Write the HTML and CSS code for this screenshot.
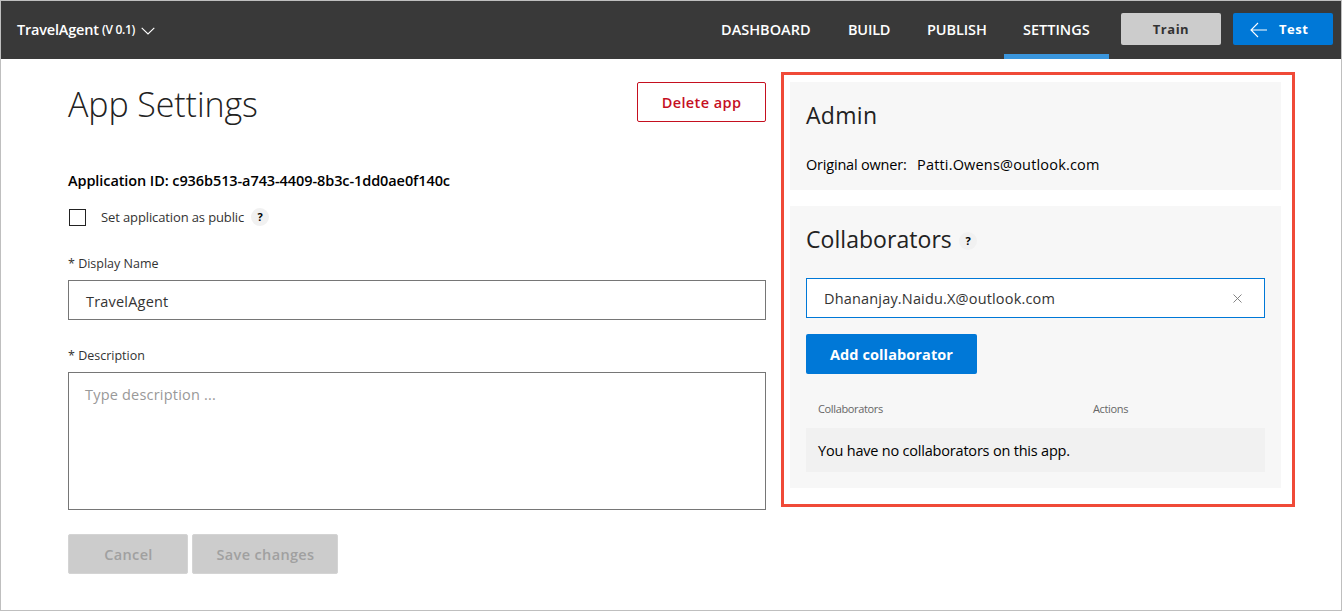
FILE: index.html
```html
<!DOCTYPE html>
<html lang="en">
<head>
<meta charset="utf-8">
<title>App Settings</title>
<link rel="stylesheet" href="styles.css">
</head>
<body>
<div class="page">
  <header class="topbar">
    <div class="app-switch">
      <span class="app-name">TravelAgent</span>
      <span class="app-version">(V 0.1)</span>
      <svg class="chevron" width="14" height="8" viewBox="0 0 14 8"><path d="M.7.8 7 7 13.3.8" fill="none" stroke="#fff" stroke-width="1.1"/></svg>
    </div>
    <nav class="nav">
      <a class="nav-item nav-dashboard">DASHBOARD</a>
      <a class="nav-item nav-build">BUILD</a>
      <a class="nav-item nav-publish">PUBLISH</a>
      <a class="nav-item nav-settings active">SETTINGS</a>
    </nav>
    <button class="top-btn train">Train</button>
    <button class="top-btn test">
      <svg class="arrow" width="18" height="16" viewBox="0 0 18 16"><path d="M17 8H1.200M8 1 1 8l7 7" fill="none" stroke="#fff" stroke-width="1.1"/></svg>
      <span>Test</span>
    </button>
  </header>
  <main class="content">
    <section class="settings">
      <div class="title-row">
        <h1 class="title">App Settings</h1>
        <button class="delete">Delete app</button>
      </div>
      <div class="app-id">Application ID: c936b513-a743-4409-8b3c-1dd0ae0f140c</div>
      <div class="public-row">
        <span class="checkbox"></span>
        <span class="public-label">Set application as public</span>
        <span class="help">?</span>
      </div>
      <div class="label label-name">* Display Name</div>
      <div class="field name-field">TravelAgent</div>
      <div class="label label-desc">* Description</div>
      <div class="field desc-field">Type description ...</div>
      <div class="actions">
        <button class="disabled cancel">Cancel</button>
        <button class="disabled save">Save changes</button>
      </div>
    </section>
    <aside class="access">
      <section class="panel admin">
        <h2 class="heading">Admin</h2>
        <div class="owner"><span class="owner-label">Original owner:</span><span class="owner-mail">Patti.Owens@outlook.com</span></div>
      </section>
      <section class="panel collab">
        <div class="collab-head"><h2 class="heading heading-collab">Collaborators</h2><span class="help">?</span></div>
        <div class="email-field">
          <span class="email">Dhananjay.Naidu.X@outlook.com</span>
          <svg width="9" height="9" viewBox="0 0 9 9"><path d="M.5.5l8 8M8.500.5l-8 8" fill="none" stroke="#777" stroke-width=".9"/></svg>
        </div>
        <button class="add">Add collaborator</button>
        <div class="table-head"><span class="col-name">Collaborators</span><span class="col-actions">Actions</span></div>
        <div class="table-empty"><span>You have no collaborators on this app.</span></div>
      </section>
    </aside>
  </main>
</div>
</body>
</html>
```
FILE: styles.css
```css
* { box-sizing: border-box; }
body { margin: 0; font-family: "Open Sans", "Noto Sans", sans-serif; color: #000; background: #fff; }
button { font-family: inherit; border: 0; padding: 0; margin: 0; border-radius: 2px; }
h1, h2 { margin: 0; font-weight: 300; }
span, a, h1, h2, div, button { white-space: nowrap; }

.page { width: 1342px; height: 611px; border: 1px solid #bfbfbf; overflow: hidden; }
.topbar { height: 58px; background: #393939; color: #fff; display: flex; align-items: flex-start; }
.app-switch { width: 702px; height: 57px; padding-left: 16px; display: flex; align-items: center; font-weight: 600; }
.app-name { width: 85px; font-size: 14.5px; letter-spacing: -.2px; }
.app-version { width: 39px; font-size: 12px; letter-spacing: -.3px; }
.chevron { margin-top: 3px; }
.nav { display: flex; height: 58px; }
.nav-item { height: 58px; line-height: 57px; font-size: 14.5px; font-weight: 600; letter-spacing: 0; padding-left: 18px; }
.nav-dashboard { width: 127px; }
.nav-build { width: 79px; letter-spacing: -.2px; }
.nav-publish { width: 95px; letter-spacing: -.1px; }
.nav-settings { width: 105px; padding-left: 19px; }
.active { border-bottom: 5px solid #3a96dd; }
.top-btn { width: 100px; height: 32px; margin-top: 12px; font-size: 13px; font-weight: 700; letter-spacing: .5px; }
.train { background: #ccc; color: #333; margin-left: 12px; }
.test { background: #0078d7; color: #fff; margin-left: 12px; display: flex; align-items: center; padding-left: 17px; gap: 11px; }
.arrow { margin-top: 2px; }

.content { display: flex; align-items: flex-start; padding-left: 67px; }
.settings { width: 698px; padding-top: 23px; }
.title-row { display: flex; justify-content: space-between; height: 88px; }
.title { font-size: 34px; line-height: 44px; letter-spacing: -.1px; color: #222; }
.delete { width: 129px; height: 40px; border: 1px solid #c50f1f; color: #c50f1f; background: #fff; font-size: 14.5px; font-weight: 600; letter-spacing: .4px; }
.app-id { font-size: 14.5px; font-weight: 600; line-height: 22px; letter-spacing: -.09px; }
.public-row { display: flex; align-items: center; height: 20px; margin-top: 15px; }
.checkbox { width: 17px; height: 17px; border: 1px solid #222; margin-left: 1px; }
.public-label { width: 150px; margin-left: 15px; font-size: 13px; letter-spacing: -.12px; color: #333; }
.help { width: 18px; height: 18px; border-radius: 50%; background: #f1f1f1; font-size: 11px; font-weight: 700; line-height: 18px; text-align: center; }
.label { font-size: 12.5px; line-height: 20px; color: #333; }
.label-name { margin-top: 27px; }
.label-desc { margin-top: 26px; }
.field { border: 1px solid #767676; font-size: 14.5px; }
.name-field { height: 40px; line-height: 41px; margin-top: 6px; padding-left: 17px; letter-spacing: .2px; color: #333; }
.desc-field { height: 138px; line-height: 20px; margin-top: 6px; padding: 12px 16px; letter-spacing: .2px; color: #999; }
.actions { display: flex; gap: 4px; margin-top: 24px; }
.disabled { height: 40px; background: #ccc; color: #a0a0a0; border: 1px solid #d4d4d4; font-size: 14.5px; font-weight: 600; letter-spacing: .35px; padding-left: 1px; }
.cancel { width: 120px; }
.save { width: 146px; }

.access { width: 514px; height: 435px; margin: 13px 0 0 15px; border: 3px solid #f04a38; padding: 7px 11px 0 6px; }
.panel { background: #f7f7f7; padding: 0 16px; }
.heading { font-size: 23px; line-height: 32px; letter-spacing: .3px; color: #222; font-weight: 400; }
.admin { height: 108px; padding-top: 17px; }
.owner { display: flex; margin-top: 24px; font-size: 14.5px; line-height: 20px; }
.owner-label { width: 111px; letter-spacing: -.2px; }
.owner-mail { letter-spacing: .18px; }
.collab { height: 282px; margin-top: 16px; padding-top: 17px; }
.collab-head { display: flex; align-items: center; height: 32px; }
.heading-collab { width: 153px; letter-spacing: .05px; }
.collab-head .help { margin-top: 4px; }
.email-field { height: 40px; margin-top: 23px; border: 1px solid #0078d7; background: #fff; display: flex; align-items: center; justify-content: space-between; padding: 0 22px 0 17px; font-size: 14.5px; color: #333; }
.email { letter-spacing: .17px; }
.add { width: 171px; height: 40px; margin-top: 16px; background: #0078d7; color: #fff; font-size: 14.5px; font-weight: 700; letter-spacing: .1px; display: block; }
.table-head { display: flex; margin-top: 25px; height: 20px; line-height: 20px; font-size: 11px; letter-spacing: -.35px; color: #666; padding-left: 12px; }
.col-name { width: 275px; }
.table-empty { height: 44px; margin-top: 9px; line-height: 45px; background: #f1f1f1; padding-left: 12px; font-size: 14.5px; letter-spacing: -.2px; }
```
